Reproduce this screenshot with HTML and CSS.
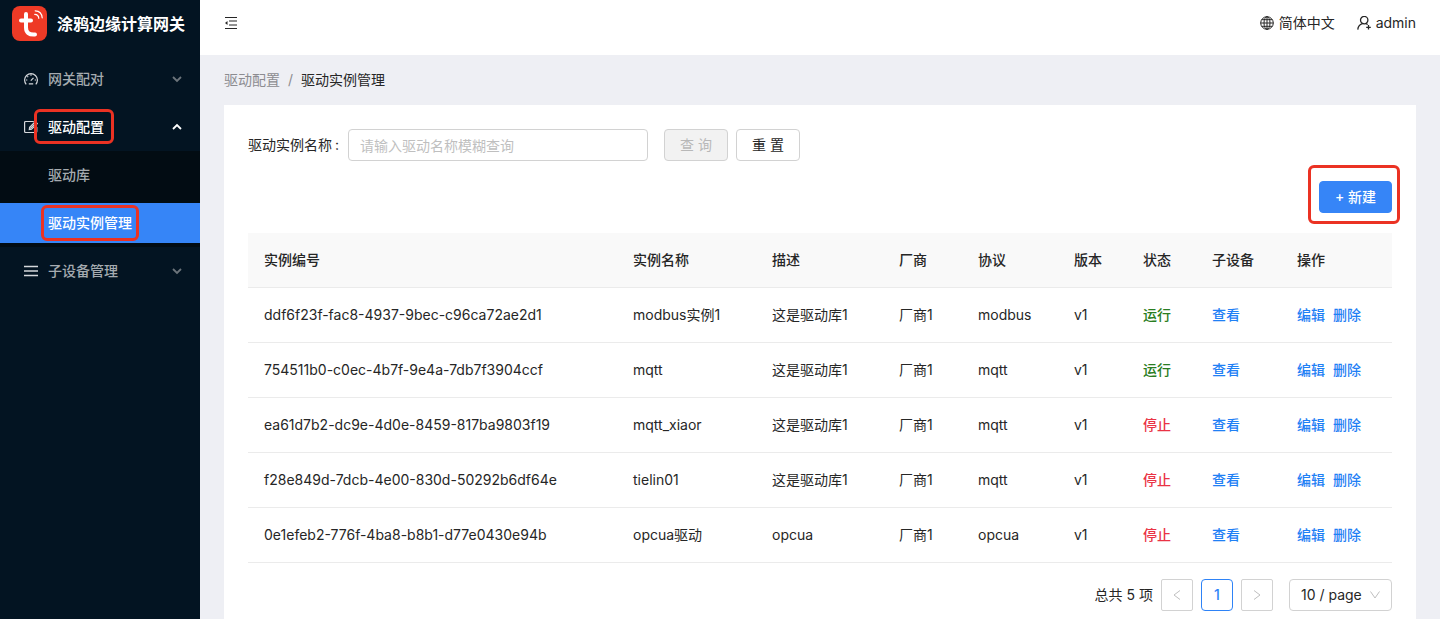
FILE: index.html
```html
<!DOCTYPE html>
<html lang="zh-CN">
<head>
<meta charset="utf-8">
<title>涂鸦边缘计算网关</title>
<link rel="stylesheet" href="styles.css">
</head>
<body>
<div class="shell">
  <aside class="sidebar">
    <div class="brand">
      <svg class="brand-logo" viewBox="0 0 35 35" aria-hidden="true">
        <rect width="35" height="35" rx="8" fill="#ee3a26"/>
        <path d="M14 8v13.500c0 5 3 7.500 9 7M9 14.500h10" fill="none" stroke="#fff" stroke-width="4" stroke-linecap="round" stroke-linejoin="round"/>
        <path d="M22.800 8.400c2.400.1 3.800 1.500 4 3.900M23.200 4.800c4.100.2 6.700 2.800 7 7" fill="none" stroke="#fff" stroke-width="1.200" stroke-linecap="round"/>
      </svg>
      <span class="brand-name">涂鸦边缘计算网关</span>
    </div>
    <nav class="menu">
      <button class="menu-item" type="button">
        <svg class="icon" viewBox="0 0 14 14" aria-hidden="true"><path d="M2.200 12.300a6.400 6.400 0 1 1 9.600 0M6.800 8.700l2.700-2.900M7 2.400v1.300M3.300 4.300l.9.900M2 8h1.300M10.700 8H12M4.800 11.800h4.400"/></svg>
        <span>网关配对</span>
        <svg class="arrow" viewBox="0 0 10 10" aria-hidden="true"><path d="M1 3l4 4 4-4"/></svg>
      </button>
      <button class="menu-item menu-item-open" type="button">
        <svg class="icon" viewBox="0 0 14 14" aria-hidden="true"><path d="M12.800 7v4.500a1 1 0 0 1-1 1H1.600a1 1 0 0 1-1-1v-9a1 1 0 0 1 1-1h8.200M5.300 9.600l.3-2.200 5.700-5.700 1.900 1.900-5.700 5.700zM6.300 8.600l4-4"/></svg>
        <span class="marked marked-group">驱动配置</span>
        <svg class="arrow" viewBox="0 0 10 10" aria-hidden="true"><path d="M1 7l4-4 4 4"/></svg>
      </button>
      <div class="submenu">
        <a class="submenu-item" href="#library">驱动库</a>
        <a class="submenu-item submenu-item-active" href="#instances"><span class="marked marked-page">驱动实例管理</span></a>
      </div>
      <button class="menu-item" type="button">
        <svg class="icon icon-lines" viewBox="0 0 14 14" aria-hidden="true"><path d="M0 2.500h14M0 7h14M0 11.500h14"/></svg>
        <span>子设备管理</span>
        <svg class="arrow" viewBox="0 0 10 10" aria-hidden="true"><path d="M1 3l4 4 4-4"/></svg>
      </button>
    </nav>
  </aside>
  <div class="page">
    <header class="topbar">
      <button class="plain" type="button" aria-label="收起菜单">
        <svg class="icon" viewBox="0 0 14 14" aria-hidden="true"><path d="M1 1.500h12M5 5h8M5 9h8M1 12.500h12"/><path class="solid" d="M3.500 5v4L1 7z"/></svg>
      </button>
      <div class="topbar-tools">
        <button class="plain" type="button">
          <svg class="icon" viewBox="0 0 14 14" aria-hidden="true"><circle cx="7" cy="7" r="6.300"/><ellipse cx="7" cy="7" rx="3" ry="6.300"/><path d="M7 .7v12.600M.7 7h12.600M1.700 3.700h10.600M1.700 10.300h10.600"/></svg>
          <span>简体中文</span>
        </button>
        <button class="plain" type="button">
          <svg class="icon icon-user" viewBox="0 0 14 14" aria-hidden="true"><circle cx="7.200" cy="4.100" r="3.700"/><path d="M.8 13.600c.2-3.200 1.900-5 4.600-5.900M9 7.600l1.700.9M11.500 9v4.600M9.200 11.300h4.600"/></svg>
          <span>admin</span>
        </button>
      </div>
    </header>
    <main class="content">
      <nav class="breadcrumb" aria-label="路径"><a href="#drivers">驱动配置</a><span>/</span><strong>驱动实例管理</strong></nav>
      <section class="card">
        <form class="filter">
          <label for="name">驱动实例名称<span class="colon">:</span></label>
          <input class="field" id="name" type="text" placeholder="请输入驱动名称模糊查询">
          <button class="button" type="button" disabled>查 询</button>
          <button class="button" type="reset">重 置</button>
        </form>
        <div class="actions"><span class="marked marked-create"><button class="button button-primary" type="button">+ 新建</button></span></div>
        <table class="table">
          <colgroup><col><col class="col-name"><col class="col-desc"><col class="col-vendor"><col class="col-protocol"><col class="col-small"><col class="col-small"><col class="col-device"><col class="col-action"></colgroup>
          <thead><tr><th>实例编号</th><th>实例名称</th><th>描述</th><th>厂商</th><th>协议</th><th>版本</th><th>状态</th><th>子设备</th><th>操作</th></tr></thead>
          <tbody>
            <tr><td>ddf6f23f-fac8-4937-9bec-c96ca72ae2d1</td><td>modbus实例1</td><td>这是驱动库1</td><td>厂商1</td><td>modbus</td><td>v1</td><td class="running">运行</td><td><a href="#view">查看</a></td><td><a href="#edit">编辑</a><a href="#delete">删除</a></td></tr>
            <tr><td>754511b0-c0ec-4b7f-9e4a-7db7f3904ccf</td><td>mqtt</td><td>这是驱动库1</td><td>厂商1</td><td>mqtt</td><td>v1</td><td class="running">运行</td><td><a href="#view">查看</a></td><td><a href="#edit">编辑</a><a href="#delete">删除</a></td></tr>
            <tr><td>ea61d7b2-dc9e-4d0e-8459-817ba9803f19</td><td>mqtt_xiaor</td><td>这是驱动库1</td><td>厂商1</td><td>mqtt</td><td>v1</td><td class="stopped">停止</td><td><a href="#view">查看</a></td><td><a href="#edit">编辑</a><a href="#delete">删除</a></td></tr>
            <tr><td>f28e849d-7dcb-4e00-830d-50292b6df64e</td><td>tielin01</td><td>这是驱动库1</td><td>厂商1</td><td>mqtt</td><td>v1</td><td class="stopped">停止</td><td><a href="#view">查看</a></td><td><a href="#edit">编辑</a><a href="#delete">删除</a></td></tr>
            <tr><td>0e1efeb2-776f-4ba8-b8b1-d77e0430e94b</td><td>opcua驱动</td><td>opcua</td><td>厂商1</td><td>opcua</td><td>v1</td><td class="stopped">停止</td><td><a href="#view">查看</a></td><td><a href="#edit">编辑</a><a href="#delete">删除</a></td></tr>
          </tbody>
        </table>
        <div class="pagination">
          <span>总共 5 项</span>
          <button class="pager" type="button" disabled aria-label="上一页"><svg viewBox="0 0 12 12" aria-hidden="true"><path d="M9 1.500L3 6l6 4.500"/></svg></button>
          <button class="pager pager-current" type="button">1</button>
          <button class="pager" type="button" disabled aria-label="下一页"><svg viewBox="0 0 12 12" aria-hidden="true"><path d="M3 1.500L9 6l-6 4.500"/></svg></button>
          <div class="page-size">
            <select aria-label="每页条数"><option>10 / page</option><option>20 / page</option></select>
            <svg viewBox="0 0 12 12" aria-hidden="true"><path d="M1.500 2.500L6 9l4.500-6.500"/></svg>
          </div>
        </div>
      </section>
    </main>
  </div>
</div>
</body>
</html>
```
FILE: styles.css
```css
* { box-sizing: border-box; }

body {
  margin: 0;
  color: #262626;
  font: 14px/22px Inter, "Noto Sans CJK SC", sans-serif;
}

button, input, select { font: inherit; color: inherit; }
button { cursor: pointer; }
a { color: #1f80f5; text-decoration: none; }
svg { flex: none; fill: none; stroke: currentColor; }

.shell { display: flex; height: 100vh; }

.sidebar { flex: none; width: 200px; background: #031422; color: #fff; }
.brand { display: flex; align-items: center; gap: 10px; height: 55px; padding: 0 12px 8px; }
.brand-logo { width: 35px; height: 35px; stroke: none; }
.brand-name { font-size: 16px; font-weight: 600; white-space: nowrap; }

.menu { display: flex; flex-direction: column; }
.menu-item {
  display: flex;
  align-items: center;
  gap: 10px;
  height: 40px;
  margin: 4px 0;
  padding: 0 18px 0 24px;
  border: 0;
  background: none;
  color: #a5abb0;
  font-weight: 500;
}
.menu-item-open { color: #fff; }
.icon { width: 14px; height: 14px; }
.icon .solid { fill: currentColor; stroke: none; }
.icon-user { stroke-width: 1.3; }
.menu-item .icon { color: #d5d8dc; stroke-width: 1.2; }
.menu-item .icon-lines { stroke-width: 1.5; }
.arrow { width: 10px; height: 10px; margin-left: auto; stroke-width: 1.8; }
.menu-item:not(.menu-item-open) .arrow { color: #6c747b; }

.submenu { display: flex; flex-direction: column; gap: 8px; padding: 4px 0; background: #020c13; }
.submenu-item { display: flex; align-items: center; height: 40px; padding-left: 48px; color: #a5abb0; font-weight: 500; }
.submenu-item-active { background: #3685f7; color: #fff; }

/* Red outlines that call out the steps to follow */
.marked { position: relative; }
.marked::after {
  content: "";
  position: absolute;
  inset: -7px;
  border: 3px solid #eb3223;
  border-radius: 6px;
  pointer-events: none;
}
.marked-group::after { inset: -7px -10px -6px -14px; }
.marked-create::after { inset: -16px -8px -11px -11px; }

.page { flex: 1; min-width: 0; display: flex; flex-direction: column; }
.topbar { flex: none; display: flex; align-items: center; justify-content: space-between; height: 55px; padding: 0 24px 10px; background: #fff; }
.topbar-tools { display: flex; gap: 22px; }
.plain { display: flex; align-items: center; gap: 5px; padding: 0; border: 0; background: none; }

.content { flex: 1; min-height: 0; display: flex; flex-direction: column; padding: 14px 24px 0; background: #eeeff4; overflow-y: auto; scrollbar-width: none; }
.breadcrumb { display: flex; gap: 8px; margin-bottom: 14px; color: #8c8c90; }
.breadcrumb a { color: inherit; }
.breadcrumb strong { color: #262626; font-weight: 400; }
.card { flex: 1 0 auto; padding: 24px; background: #fff; }

.filter { display: flex; align-items: center; }
.colon { margin: 0 9px 0 3px; }
.field { width: 300px; height: 32px; margin-right: 16px; padding: 0 11px; border: 1px solid #d2d2d2; border-radius: 4px; background: #fff; }
.field::placeholder { color: #bfbfbf; }
.button { height: 32px; padding: 0 15px; border: 1px solid #d2d2d2; border-radius: 4px; background: #fff; }
.filter .button { width: 64px; margin-right: 8px; }
.button:disabled { background: #f2f2f2; color: #b8b8b8; }
.button-primary { display: block; border-color: #3685f7; background: #3685f7; color: #fff; font-weight: 500; }

.actions { display: flex; justify-content: flex-end; margin: 20px 0; }

.table { width: 100%; table-layout: fixed; border-collapse: separate; border-spacing: 0; }
.col-name { width: 139px; }
.col-desc { width: 127px; }
.col-vendor { width: 79px; }
.col-protocol { width: 96px; }
.col-small { width: 69px; }
.col-device { width: 85px; }
.col-action { width: 111px; }
.table th, .table td { height: 55px; padding: 0 16px; border-bottom: 1px solid #ebebeb; text-align: left; white-space: nowrap; }
.table th { background: #f9f9f9; font-weight: 500; }
.table td a { font-weight: 500; }
.table td a + a { margin-left: 8px; }
.table .running { color: #2a7d22; font-weight: 500; }
.table .stopped { color: #ea3345; font-weight: 500; }

.pagination { display: flex; align-items: center; justify-content: flex-end; gap: 8px; margin-top: 16px; }
.pager { display: flex; align-items: center; justify-content: center; width: 32px; height: 32px; padding: 0; border: 1px solid #d2d2d2; border-radius: 2px; background: #fff; }
.pager svg, .page-size svg { width: 12px; height: 12px; color: #bfbfbf; }
.pager-current { border-color: #2e83f7; border-radius: 4px; color: #2e83f7; font-weight: 500; }
.page-size { position: relative; margin-left: 8px; }
.page-size select { appearance: none; display: block; width: 103px; height: 32px; padding: 0 11px; border: 1px solid #d2d2d2; border-radius: 4px; background: #fff; }
.page-size svg { position: absolute; top: 10px; right: 11px; pointer-events: none; }
```
